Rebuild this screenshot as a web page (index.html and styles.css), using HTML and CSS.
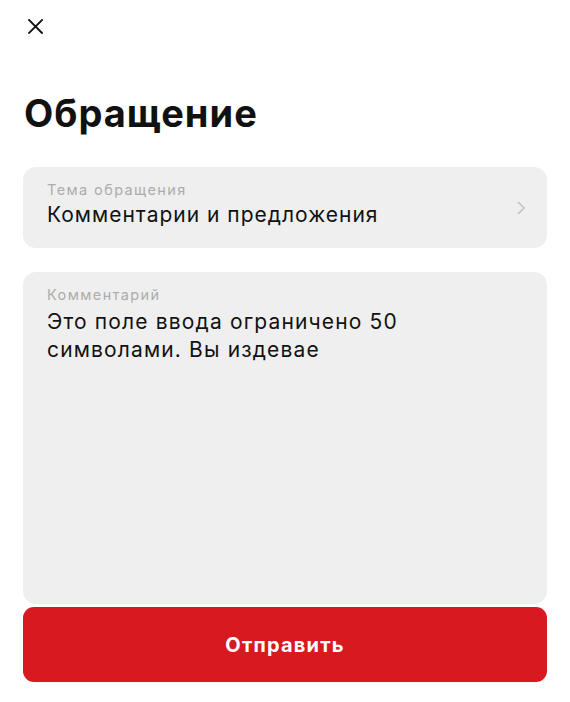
FILE: index.html
```html
<!DOCTYPE html>
<html lang="ru">
<head>
<meta charset="utf-8">
<link rel="stylesheet" href="styles.css">
</head>
<body>
<div class="screen">
  <div class="topbar">
    <svg class="close" width="15" height="15" viewBox="0 0 15 15"><path d="M1 1L14 14M14 1L1 14" stroke="#111" stroke-width="1.8" stroke-linecap="square" fill="none"/></svg>
  </div>
  <h1 class="title">Обращение</h1>
  <div class="card select">
    <div class="field">
      <div class="label">Тема обращения</div>
      <div class="value">Комментарии и предложения</div>
    </div>
    <svg class="chev" width="8" height="14" viewBox="0 0 8 14"><path d="M1 1L7 7L1 13" stroke="#bdbdbd" stroke-width="1.3" fill="none"/></svg>
  </div>
  <div class="card comment">
    <div class="label">Комментарий</div>
    <div class="value text">Это поле ввода ограничено 50<br>символами. Вы издевае</div>
  </div>
  <button class="submit">Отправить</button>
</div>
</body>
</html>
```
FILE: styles.css
```css
html, body { margin: 0; padding: 0; background: #fff; }
body { font-family: Inter, "Noto Sans", sans-serif; color: #111; }
.screen {
  height: 702px;
  box-sizing: border-box;
  padding: 19px 23px 20px 23px;
  display: flex;
  flex-direction: column;
}
.topbar { height: 15px; padding-left: 5px; }
.close { display: block; }
.title {
  margin: 57px 0 0 0;
  font-size: 38px;
  line-height: 45px;
  font-weight: 700;
  letter-spacing: 1px;
  padding-left: 1px;
}
.card {
  background: #efefef;
  border-radius: 13px;
  box-sizing: border-box;
}
.select {
  margin-top: 31px;
  height: 81px;
  padding: 14px 24px 0 24px;
  display: flex;
  align-items: flex-start;
  justify-content: space-between;
}
.chev { align-self: center; margin-top: -13px; margin-right: -2px; }
.label {
  font-size: 14.5px;
  line-height: 18px;
  color: #acacac;
  font-weight: 400;
  letter-spacing: 1.4px;
}
.value {
  margin-top: 3px;
  font-size: 21px;
  line-height: 26px;
  color: #121212;
  letter-spacing: 1px;
}
.comment {
  margin-top: 24px;
  flex: 1;
  padding: 14px 24px;
  margin-bottom: 3px;
}
.text { line-height: 28px; margin-top: 4px; letter-spacing: 1.15px; }
.submit {
  height: 75px;
  border: none;
  border-radius: 11px;
  background: #d71920;
  color: #fff;
  font-family: Inter, "Noto Sans", sans-serif;
  font-size: 20px;
  font-weight: 700;
  letter-spacing: 1.2px;
  padding: 0;
}
```
